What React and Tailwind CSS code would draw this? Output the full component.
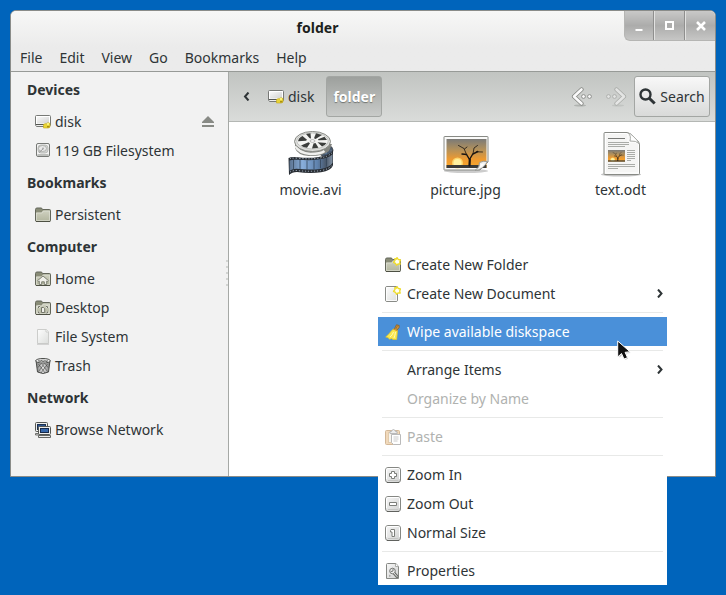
import React from "react";

const icon16 = { width: 16, height: 16, viewBox: "0 0 16 16", "aria-hidden": true, className: "shrink-0" };

function Gradients() {
  return (
    <svg width="0" height="0" className="absolute" aria-hidden="true">
      <defs>
        <linearGradient id="folderFill" x1="0" y1="0" x2="0" y2="1">
          <stop offset="0" stopColor="#cfd1c0" />
          <stop offset="1" stopColor="#b3b69f" />
        </linearGradient>
        <linearGradient id="paperFill" x1="0" y1="0" x2="1" y2="1">
          <stop offset="0" stopColor="#fdfdfd" />
          <stop offset="1" stopColor="#dcdedc" />
        </linearGradient>
        <linearGradient id="silver" x1="0" y1="0" x2="1" y2="1">
          <stop offset="0" stopColor="#f8f8f8" />
          <stop offset="1" stopColor="#d0d1d0" />
        </linearGradient>
        <linearGradient id="metal" x1="0" y1="0" x2="1" y2="0">
          <stop offset="0" stopColor="#777" />
          <stop offset="0.5" stopColor="#e8e8e8" />
          <stop offset="1" stopColor="#777" />
        </linearGradient>
        <linearGradient id="sunset" x1="0" y1="0" x2="0" y2="1">
          <stop offset="0" stopColor="#7a7a78" />
          <stop offset="0.35" stopColor="#b0905c" />
          <stop offset="0.7" stopColor="#ee9a30" />
          <stop offset="1" stopColor="#f8a82c" />
        </linearGradient>
        <linearGradient id="film" x1="0" y1="0" x2="1" y2="0">
          <stop offset="0" stopColor="#5c7390" />
          <stop offset="0.3" stopColor="#88aedb" />
          <stop offset="0.65" stopColor="#5f82ad" />
          <stop offset="0.85" stopColor="#4a586a" />
          <stop offset="1" stopColor="#8494a6" />
        </linearGradient>
      </defs>
    </svg>
  );
}

function DiskIcon() {
  return (
    <svg {...icon16}>
      <path d="M1.500 1.500h13a1 1 0 0 1 1 1v8.500l-1 1.500h-13l-1-1.500v-8.500a1 1 0 0 1 1-1z" fill="#fff" stroke="#777976" />
      <path d="M2 3h12v6.500h-12z" fill="url(#silver)" />
      <path d="M1 10.500h14" stroke="#555753" />
      <rect x="2" y="11" width="7" height="1" fill="#eeeeec" />
      <path d="M8.500 10.500q2-1.500 3-.5l.5-1q2-.5 3 .5v3.500q-1 1-2 1h-4.500z" fill="#e8d438" stroke="#c4a818" strokeWidth=".6" />
      <path d="M12 9h2v2h-2z" fill="#fbf37a" />
      <path d="M12 12h2.500v1.500h-2.500z" fill="#a98f14" />
    </svg>
  );
}

function DriveIcon() {
  return (
    <svg {...icon16}>
      <rect x="1.500" y=".5" width="13" height="13" rx="1.500" fill="#f4f4f4" stroke="#777976" />
      <rect x="3" y="2" width="10" height="8" rx="3" fill="#d2d3d1" stroke="#b4b6b2" strokeWidth=".8" />
      <ellipse cx="7.500" cy="5.500" rx="4" ry="3" fill="#e9e9e9" stroke="#a6a8a4" strokeWidth=".8" />
      <path d="M4 9.500l4-3.500" stroke="#999" />
      <circle cx="8" cy="5.500" r="1" fill="#aaa" />
      <path d="M2.500 11.500h11M2.500 12.500h11" stroke="#a5a7a3" strokeWidth=".7" />
    </svg>
  );
}

function FolderIcon({ children }) {
  return (
    <svg {...icon16}>
      <path d="M.5 13V2.500q0-1.500 1.500-1.500h4q1.200 0 1.500 1.500h7q1 0 1 1V13.500q0 1-1 1h-13q-1 0-1-1.500z" fill="#898c77" stroke="#63665a" />
      <path d="M1 5.500h5.500l1.500-2h7v10.500H1z" fill="url(#folderFill)" />
      <path d="M1.500 13.500V6h5.500l1.500-2h6v9.500z" fill="none" stroke="#e3e4da" strokeOpacity=".6" />
      <path d="M1 14.500h14" stroke="#4d5043" />
      {children}
    </svg>
  );
}

function HomeGlyph() {
  return (
    <path d="M8 5l5.500 4.700-1 1-.8-.6v3.400h-2.400v-2.700h-2.600v2.700H4.300v-3.400l-.8.6-1-1z" fill="#f0f0ea" stroke="#74776a" strokeWidth=".9" />
  );
}

function DesktopGlyph() {
  return (
    <g fill="none" stroke="#74776a">
      <path d="M3.500 8V6.500H5M11 6.500h1.500V8M3.500 11.500V13H5M11 13h1.500v-1.500" stroke="#f0f0ea" strokeWidth="2" />
      <path d="M3.500 8V6.500H5M11 6.500h1.500V8M3.500 11.500V13H5M11 13h1.500v-1.500" />
      <path d="M6.500 7.500h2l1.200 1.200v3.800H6.500z" fill="#eeeee8" />
    </g>
  );
}

function StarBurst() {
  return (
    <path d="M12 .5l1.400 2 2.100.4-.8 2 .5 2.300-2.200-.2-1.500 1.300-1-2-2-1 1.500-1.700-.2-2 1.900.4z" fill="#fffff4" stroke="#efdc28" strokeWidth="1.300" strokeLinejoin="round" />
  );
}

function PaperIcon() {
  return (
    <svg {...icon16}>
      <path d="M2.500.5h9l2 2.500v11.500h-11z" fill="url(#paperFill)" stroke="#cccdcb" />
      <path d="M11 .5v2.500h2.500" fill="#fff" stroke="#cccdcb" />
      <path d="M2 15.300h12" stroke="#bbb" strokeWidth=".7" />
    </svg>
  );
}

function NewDocumentIcon() {
  return (
    <svg {...icon16}>
      <rect x=".5" y=".5" width="12" height="15" rx="1.500" fill="url(#paperFill)" stroke="#898b87" />
      <rect x="1.500" y="1.500" width="10" height="13" fill="none" stroke="#fff" strokeOpacity=".8" />
      <StarBurst />
    </svg>
  );
}

function TrashIcon() {
  return (
    <svg {...icon16}>
      <path d="M1 2.500l1.500 11.500q5.500 3 11 0l1.500-11.500z" fill="url(#metal)" stroke="#4b4d4a" />
      <path d="M3.500 6l6.500 9M6.500 5.500l6 8M10 5.500l3 4M12.500 6l-6.500 9M9.500 5.500l-6 8M6 5.500l-3 4" stroke="#3f413e" strokeWidth=".6" />
      <ellipse cx="8" cy="2.800" rx="7.300" ry="2.300" fill="#f2f2f2" stroke="#4b4d4a" />
      <ellipse cx="8" cy="3" rx="5.200" ry="1.200" fill="#686a67" />
      <path d="M3.500 3.600l1.500-1 1.500.8 1.500-1 2 .8 1.500-.7 1 .7" fill="none" stroke="#eee" strokeWidth=".7" />
    </svg>
  );
}

function NetworkIcon() {
  return (
    <svg {...icon16}>
      <rect x=".5" y=".5" width="12" height="9" rx="1" fill="#eeeeec" stroke="#555753" />
      <rect x="2.500" y="2.500" width="8" height="5" fill="#2c5590" stroke="#1c3050" />
      <path d="M.5 11.500h4v1.500h-4z" fill="#ddd" stroke="#555753" strokeWidth=".8" />
      <rect x="3.500" y="4.500" width="12" height="8" rx="1" fill="#eeeeec" stroke="#555753" />
      <rect x="5.500" y="6.500" width="8" height="4" fill="#3567ab" stroke="#16294a" />
      <path d="M3.500 13.500h12v2h-12z" fill="#eee" stroke="#555753" strokeWidth=".9" />
    </svg>
  );
}

function EjectIcon() {
  return (
    <svg width="12" height="11" viewBox="0 0 12 11" aria-hidden="true">
      <path d="M6 0l6 6v1H0V6z" fill="#888a85" />
      <rect y="9" width="12" height="2" fill="#888a85" />
    </svg>
  );
}

function BroomIcon() {
  return (
    <svg {...icon16}>
      <path d="M11.500.8l2.700.7-.2 2-2 2.500-2.500-1.200z" fill="#d39a45" stroke="#8a5a1c" strokeWidth=".8" />
      <path d="M12.500 1.800l-1.500 3" stroke="#8a5a1c" strokeWidth=".7" />
      <path d="M8.500 5l4 1.300-.3 3.700-.5 5.500h-3.700l-1.500-1-2 .8-1.500-1.800-2.300-.5q4-3.500 6-6.500z" fill="#fbe84e" stroke="#e6c81e" strokeWidth=".7" />
      <path d="M8.500 8q-1 3-3.500 5M10.500 8q-.5 3.500-1.500 6" stroke="#fffab4" fill="none" />
      <path d="M8.300 5.200l4.200 1.500" stroke="#d0892c" />
    </svg>
  );
}

function PasteIcon() {
  return (
    <svg {...icon16}>
      <g opacity=".5">
        <rect x=".5" y="1.500" width="14" height="14" rx="1" fill="#e4b579" stroke="#a87434" />
        <rect x="3.500" y="3.500" width="9" height="10" fill="#f2ece0" stroke="#c49a60" />
        <path d="M5 4.500V2.500h1.500q.5-2 2-2 1.300 0 2 2h1.500v2z" fill="#ddd" stroke="#777" />
        <path d="M6.500 5.500h9v10h-7l-2-2z" fill="#fff" stroke="#777" />
        <path d="M8.500 8h5M8.500 10h5M8.500 12h4" stroke="#999" />
      </g>
    </svg>
  );
}

function KeyIcon({ children }) {
  return (
    <svg {...icon16}>
      <rect x=".5" y=".5" width="15" height="15" rx="2.500" fill="url(#silver)" stroke="#858783" />
      <path d="M2 15.500h12" stroke="#60625e" />
      <path d="M1.500 12V2.500q0-1 1-1h11q1 0 1 1V12" stroke="#fff" fill="none" />
      <path d="M3 13.500h10" stroke="#c5c6c4" />
      <g fill="#fff" stroke="#7c7e7a">{children}</g>
    </svg>
  );
}

function PropertiesIcon() {
  return (
    <svg {...icon16}>
      <path d="M1.500 1.500q0-1 1-1h8.500l2.500 3v12h-12z" fill="url(#silver)" stroke="#858783" />
      <path d="M10.500.5v3h3" fill="#fff" stroke="#9a9c98" strokeWidth=".8" />
      <path d="M8.500 9.500l3.500 4" stroke="#6a6c68" strokeWidth="3" strokeLinecap="round" />
      <circle cx="7.500" cy="8" r="2.800" fill="#ececec" stroke="#777976" />
      <path d="M8 5.500v2.500l-2.200.7" fill="none" stroke="#777976" />
      <path d="M8.500 9.500l3.500 4" stroke="#ececec" strokeLinecap="round" />
      <path d="M4 11.500l2.500 1.500-2.500 1z" fill="#aaa" />
    </svg>
  );
}

function Chevron({ flip }) {
  return (
    <svg width="7" height="9" viewBox="0 0 7 9" aria-hidden="true" className="shrink-0">
      <path d={flip ? "M5.500 .5L2 4.500l3.500 4" : "M1 .5l3.500 4L1 8.500"} fill="none" stroke="#2e3436" strokeWidth="2" />
    </svg>
  );
}

function HistoryArrow({ forward }) {
  return (
    <svg width="22" height="20" viewBox="0 0 22 20" aria-hidden="true">
      <g transform={forward ? "translate(22 0) scale(-1 1)" : undefined} opacity={forward ? 0.5 : 1}>
        <ellipse cx="9" cy="18.500" rx="6" ry="1" fill="#9a9d99" opacity=".6" />
        <path d="M10.500 2.500L3 9.500l7.500 7" fill="none" stroke="#858783" strokeWidth="4.200" strokeLinecap="round" strokeLinejoin="round" />
        <path d="M10.500 2.500L3 9.500l7.500 7" fill="none" stroke="#fafafa" strokeWidth="2.600" strokeLinecap="round" strokeLinejoin="round" />
        <circle cx="12.500" cy="9.500" r="1.900" fill="#fafafa" stroke="#858783" strokeWidth=".9" />
        <circle cx="18.500" cy="9.500" r="1.900" fill="#fafafa" stroke="#858783" strokeWidth=".9" />
      </g>
    </svg>
  );
}

function SearchIcon() {
  return (
    <svg width="17" height="17" viewBox="0 0 17 17" aria-hidden="true">
      <circle cx="6.500" cy="6.500" r="5" fill="none" stroke="#2e3436" strokeWidth="2.400" />
      <path d="M10 10l5.700 5.500" stroke="#2e3436" strokeWidth="3" />
    </svg>
  );
}

function MovieIcon() {
  return (
    <svg width="48" height="48" viewBox="0 0 48 48" aria-hidden="true">
      <path d="M32 14q13-1 14 6 0 4-8 7.500l-8-5z" fill="#46586e" stroke="#2b3036" strokeWidth=".8" />
      <path d="M33 16.500q10 0 11 4" fill="none" stroke="#aebccc" strokeDasharray="1.500 1.500" />
      <path d="M34 19.500q5 1 5 4" fill="none" stroke="#6f93bd" strokeWidth="2" />
      <path d="M1.500 28q3-1.500 9-.7 19 1.700 29-2.300 5-2 6.500-5v15.500q-2 5-12 6.800-11 1.500-24-.3-5 0-8 3z" fill="#272c32" />
      <path d="M2.500 30.500q3-1.200 8-.7 19 1.500 29-2 4-1.500 6-3.500v8.500q-2 4.500-12 6.200-11 1.300-24-.2-4 0-7 2z" fill="url(#film)" />
      <path d="M3 28.700q3-1 8-.4 18 1.700 28.500-2 3.500-1.500 5.500-3.500" fill="none" stroke="#b9c8da" strokeDasharray="1.200 1.800" strokeWidth=".9" />
      <path d="M3 42q3-1.700 7-1.500 13 1.500 24 .1 9-1.600 11.500-6" fill="none" stroke="#b9c8da" strokeDasharray="1.200 1.800" strokeWidth=".9" />
      <path d="M6.500 30v9.500M13 30v9.500M20 30.500v9.300M27 30.300v9M33.500 29.300v9M39.500 28v8.500" stroke="#344559" strokeWidth=".8" />
      <path d="M8 12v6q2 7 14 8 14 .5 20-5l3-7z" fill="#82847f" />
      <path d="M8.500 16q3 7 15 8 10 0 14-3" fill="none" stroke="#f0f0ee" strokeWidth="2.500" />
      <ellipse cx="25.500" cy="11.500" rx="18" ry="10" fill="#dededc" stroke="#888a85" />
      <ellipse cx="25.500" cy="11" rx="15.800" ry="8" fill="#f4f4f2" stroke="#b8bab6" strokeWidth=".8" />
      <g fill="#3c3e3c">
        <path d="M19 4l4.500-.8.500 5.300q-1.500-.2-2-1z" />
        <path d="M29 3.300l6 1.700-6.500 4-1.500-.7z" />
        <path d="M37.500 6.800l2.500 3.200-8.500.3-.5-1z" />
        <path d="M30.500 12.200l9 .8q-1.500 2.500-4.500 3.500z" />
        <path d="M26.500 13.500l2-.5 3 4.800-6.500.7z" />
        <path d="M14 15.500l7.500-3.200 1.500 1-3 4.500q-4-.6-6-2.300z" />
        <path d="M11 11.300q.5-3.500 4.500-5.300l4.500 3.700-1 1.100z" />
      </g>
      <ellipse cx="25.500" cy="11" rx="2.500" ry="1.300" fill="#fff" stroke="#888" strokeWidth=".6" />
    </svg>
  );
}

function TreeScene() {
  return (
    <g>
      <rect width="40" height="29" fill="url(#sunset)" />
      <circle cx="11" cy="24" r="5.500" fill="#ffe27a" opacity=".8" />
      <circle cx="11" cy="24" r="4" fill="#fff1a0" />
      <rect y="26" width="40" height="3" fill="#3a3a38" />
      <g fill="none" stroke="#191513" strokeLinecap="round">
        <path d="M23 26.500l.3-6" strokeWidth="2.200" />
        <path d="M23 20.500l-3-5-4.500-.5M23.300 20l3-5 5-2.500" strokeWidth="1.400" />
        <path d="M20 15.500l-2.500-6-5.500-3M18 10l2.500-2M26.500 15l1-6 3.500-2.500M30 12.800l6 .2" strokeWidth=".8" />
      </g>
    </g>
  );
}

function PictureIcon() {
  return (
    <svg width="48" height="48" viewBox="0 0 48 48" aria-hidden="true">
      <ellipse cx="24" cy="41" rx="22" ry="2" fill="#ccc" />
      <path d="M2.500 6.500h43q.5 0 .5.5v25l-8 8H2.500q-.5 0-.5-.5V7q0-.5.500-.500z" fill="#fbfbfa" stroke="#888a85" />
      <g transform="translate(4.500 9)"><TreeScene /></g>
      <path d="M45.500 31.500q-4-1-8 1 .5 5-4.500 8 8-.5 12.500-9z" fill="#efefed" stroke="#999b97" />
      <path d="M42.500 33.500q-3 0-4 1 .2 2-1 3.500 3-1.500 5-4.500z" fill="#fff" />
    </svg>
  );
}

function TextDocumentIcon() {
  return (
    <svg width="48" height="48" viewBox="0 0 48 48" aria-hidden="true">
      <ellipse cx="24" cy="44.500" rx="20" ry="2" fill="#c4c4c4" />
      <path d="M8 2.500h22q3 .5 6 3.500l5 5q1.500 2 1.500 4v28.500q0 1-1 1h-33.500q-1 0-1-1V3.500q0-1 1-1z" fill="#f5f5f4" stroke="#888a85" />
      <path d="M8.500 3.500h21q2 0 1.500 9 8-1.500 10.500 2v28.500h-33z" fill="none" stroke="#fff" />
      <path d="M31 3q3.500 2.500 2 8 6-.5 9 2.500-1-3-6-7.500-2.500-2.500-5-3z" fill="#fff" stroke="#aaaca8" />
      <path d="M11 12.500h21M11 14.500h21M11 16.500h17M30 20.500h8M30 22.500h8M30 24.500h8M30 26.500h8M30 28.500h8M30 30.500h4M11 34.500h27M11 36.500h27M11 38.500h10" stroke="#aaaca8" />
      <path d="M11 8.500h17" stroke="#777976" />
      <g transform="translate(11 20) scale(.425 .4)"><TreeScene /></g>
    </svg>
  );
}

function PointerCursor() {
  return (
    <svg width="16" height="24" viewBox="0 0 16 24" aria-hidden="true" className="pointer-events-none absolute left-[617px] top-[340px]">
      <path d="M1.500 2v14.500l3.500-3.200 2.400 5.500 2.600-1.100-2.400-5.300 4.900-.3z" transform="translate(1 1)" fill="#999" opacity=".6" />
      <path d="M.7 1v16l3.800-3.500 2.500 5.600 3.500-1.500-2.400-5.300 5-.5z" fill="#111" stroke="#fff" />
    </svg>
  );
}

const places = [
  {
    title: "Devices",
    items: [
      { name: "disk", icon: <DiskIcon />, ejectable: true },
      { name: "119 GB Filesystem", icon: <DriveIcon /> },
    ],
  },
  { title: "Bookmarks", items: [{ name: "Persistent", icon: <FolderIcon /> }] },
  {
    title: "Computer",
    items: [
      { name: "Home", icon: <FolderIcon><HomeGlyph /></FolderIcon> },
      { name: "Desktop", icon: <FolderIcon><DesktopGlyph /></FolderIcon> },
      { name: "File System", icon: <PaperIcon /> },
      { name: "Trash", icon: <TrashIcon /> },
    ],
  },
  { title: "Network", items: [{ name: "Browse Network", icon: <NetworkIcon /> }] },
];

const files = [
  { name: "movie.avi", icon: <MovieIcon /> },
  { name: "picture.jpg", icon: <PictureIcon /> },
  { name: "text.odt", icon: <TextDocumentIcon /> },
];

const menuGroups = [
  [
    { label: "Create New Folder", icon: <FolderIcon><StarBurst /></FolderIcon> },
    { label: "Create New Document", icon: <NewDocumentIcon />, submenu: true },
  ],
  [{ label: "Wipe available diskspace", icon: <BroomIcon />, active: true }],
  [
    { label: "Arrange Items", submenu: true },
    { label: "Organize by Name", disabled: true },
  ],
  [{ label: "Paste", icon: <PasteIcon />, disabled: true }],
  [
    { label: "Zoom In", icon: <KeyIcon><path d="M6.500 4.500h3v2h2v3h-2v2h-3v-2h-2v-3h2z" /></KeyIcon> },
    { label: "Zoom Out", icon: <KeyIcon><path d="M4.500 6.500h7v3h-7z" /></KeyIcon> },
    { label: "Normal Size", icon: <KeyIcon><path d="M6 4.500h3.500v7h-2.500v-4.500h-1.500v-1.500z" /></KeyIcon> },
  ],
  [{ label: "Properties", icon: <PropertiesIcon /> }],
];

function TitleBar() {
  return (
    <header className="flex h-[34px] items-start">
      <h1 className="flex-1 text-center font-bold leading-[34px] text-[#1c1f20]">folder</h1>
      <div className="flex h-[30px] overflow-hidden rounded-bl-md border-b border-l border-[#b5b5b3] bg-linear-to-b from-[#c9c9c8] via-[#acacab] to-[#c6c6c5]">
        <button aria-label="Minimize" className="flex w-[29px] items-center justify-center border-r border-[#8f8f8e]">
          <svg width="8" height="10" viewBox="0 0 8 10" aria-hidden="true"><path d="M.5 9h7" stroke="#fff" strokeWidth="2" /></svg>
        </button>
        <button aria-label="Maximize" className="flex w-[31px] items-center justify-center border-r border-l border-r-[#8f8f8e] border-l-[#e2e2e1]">
          <svg width="9" height="9" viewBox="0 0 9 9" aria-hidden="true"><path d="M1 1h7v7h-7z" fill="none" stroke="#fff" strokeWidth="2" /></svg>
        </button>
        <button aria-label="Close" className="flex w-[30px] items-center justify-center border-l border-[#e2e2e1]">
          <svg width="10" height="10" viewBox="0 0 10 10" aria-hidden="true"><path d="M1 1l8 8M9 1l-8 8" stroke="#fff" strokeWidth="2.500" /></svg>
        </button>
      </div>
    </header>
  );
}

function MenuBar() {
  return (
    <nav className="flex h-[26px] items-center gap-[17px] px-[9px]">
      {["File", "Edit", "View", "Go", "Bookmarks", "Help"].map((label) => (
        <button key={label}>{label}</button>
      ))}
    </nav>
  );
}

function Sidebar() {
  return (
    <aside className="relative w-[218px] shrink-0 border-r border-[#a6a9a6] bg-[#f2f2f2] pb-8">
      {places.map((group) => (
        <section key={group.title}>
          <h2 className="pl-4 font-bold leading-[35px]">{group.title}</h2>
          <ul>
            {group.items.map((item) => (
              <li key={item.name} className="flex h-[29px] items-center pr-[14px] pl-6">
                <a href="#" className="flex flex-1 items-center gap-1">
                  {item.icon}
                  {item.name}
                </a>
                {item.ejectable && (
                  <button aria-label="Eject disk"><EjectIcon /></button>
                )}
              </li>
            ))}
          </ul>
        </section>
      ))}
      <div className="absolute top-[188px] right-0 flex flex-col gap-1" aria-hidden="true">
        {[0, 1, 2, 3, 4].map((dot) => (
          <span key={dot} className="size-0.5 bg-[#d3d5d3]" />
        ))}
      </div>
    </aside>
  );
}

function Toolbar() {
  return (
    <div className="flex h-[50px] items-center border-b border-[#b4b7b4] bg-linear-to-b from-[#c1c4c1] to-[#dadcda] pr-[5px]">
      <button aria-label="Scroll path left" className="flex h-10 w-[34px] items-center justify-center"><Chevron flip /></button>
      <button className="flex h-10 items-center gap-1 px-[5px]">
        <DiskIcon />
        disk
      </button>
      <button className="ml-[7px] h-[41px] rounded-[3px] border border-[#a3a6a3] bg-linear-to-b from-[#9da09d] to-[#c9cbc9] px-[6px] font-bold text-white [text-shadow:0_1px_1px_#6f726f]">folder</button>
      <div className="ml-auto flex items-center gap-3 pr-[7px]">
        <button aria-label="Back"><HistoryArrow /></button>
        <button aria-label="Forward"><HistoryArrow forward /></button>
      </div>
      <button className="flex h-[41px] w-[76px] items-center justify-center gap-1 rounded-[3px] border border-[#a3a6a3] bg-linear-to-b from-[#f8f8f8] to-[#d9dad9]">
        <SearchIcon />
        Search
      </button>
    </div>
  );
}

function FileGrid() {
  return (
    <ul className="flex flex-wrap pt-2 pl-1">
      {files.map((file) => (
        <li key={file.name} className="flex w-[155px] flex-col items-center">
          {file.icon}
          <span className="leading-6">{file.name}</span>
        </li>
      ))}
    </ul>
  );
}

function ContextMenu() {
  return (
    <div role="menu" className="absolute top-[250px] left-[378px] w-[289px] bg-white">
      {menuGroups.map((group, index) => (
        <div key={group[0].label}>
          {index > 0 && <hr className="mx-1 my-1 border-t border-[#e8e9e8]" />}
          {group.map((item) => (
            <button
              key={item.label}
              role="menuitem"
              disabled={item.disabled}
              className={`flex h-[29px] w-full items-center gap-[6px] pr-[3px] pl-[7px] text-left ${
                item.active ? "bg-[#4a90d9] text-white" : item.disabled ? "text-[#b0b2b0]" : "text-[#2e3436]"
              }`}
            >
              <span className="w-4 shrink-0">{item.icon}</span>
              <span className="flex-1">{item.label}</span>
              {item.submenu && <Chevron />}
            </button>
          ))}
        </div>
      ))}
    </div>
  );
}

export default function App() {
  return (
    <div className="relative min-h-screen bg-[#0064bb] px-[10px] pt-[10px] font-['Noto_Sans','Open_Sans',sans-serif] text-sm leading-5 text-[#2e3436]">
      <Gradients />
      <main className="overflow-hidden rounded-t-md border border-[#8a8c89] bg-[#ededed]">
        <div className="border-b border-[#979a97] bg-linear-to-b from-[#f7f7f6] to-[#ebebeb] to-60%">
          <TitleBar />
          <MenuBar />
        </div>
        <div className="flex">
          <Sidebar />
          <div className="min-w-0 flex-1 bg-white">
            <Toolbar />
            <FileGrid />
          </div>
        </div>
      </main>
      <ContextMenu />
      <PointerCursor />
    </div>
  );
}
